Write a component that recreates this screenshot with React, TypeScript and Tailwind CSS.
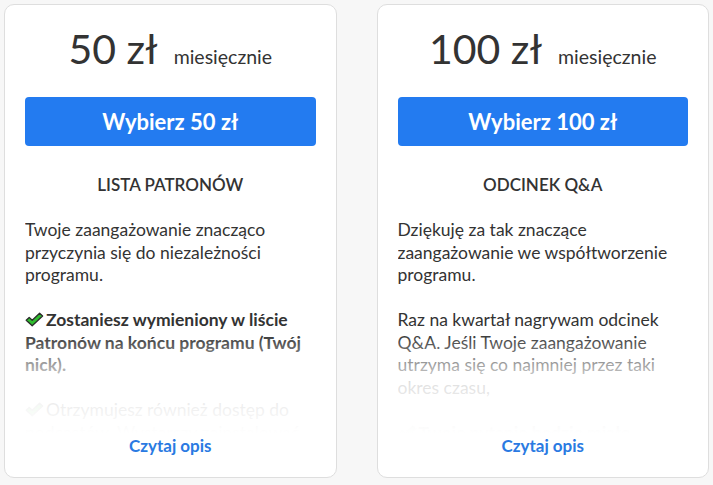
import React from "react";

function Check({ faded = false }: { faded?: boolean }) {
  return (
    <svg
      width="19"
      height="15"
      viewBox="0 0 19 15"
      className="inline-block align-[-1px] mr-[2px]"
      aria-hidden
    >
      <path
        d="M1.2 8.2 L4.2 5.4 L7.2 8.3 L14.6 1.2 L17.6 4 L7.2 13.8 Z"
        fill={faded ? "#7fcf7f" : "#2ebd2e"}
        stroke={faded ? "#8a8a8a" : "#2a2a2a"}
        strokeWidth="1.3"
        strokeLinejoin="round"
      />
    </svg>
  );
}

type Plan = {
  amount: string;
  title: string;
  body: React.ReactNode;
};

function Card({ amount, title, body }: Plan) {
  return (
    <div className="flex h-[474px] flex-col rounded-[10px] border border-[#dedede] bg-white px-5 pb-[19px] pt-[20px]">
      <div className="flex items-baseline justify-center gap-4 text-[#333333]">
        <span className="text-[41px] leading-[48px]">{amount} zł</span>
        <span className="text-[19.5px]">miesięcznie</span>
      </div>
      <button className="mt-[24px] h-[49px] w-full rounded-[4px] bg-[#237bf0] text-[22px] font-bold text-white">
        Wybierz {amount} zł
      </button>
      <div className="mt-[27px] text-center text-[17px] font-semibold uppercase leading-6 text-[#333333]">
        {title}
      </div>
      <div className="relative mt-[22px] h-[214px] overflow-hidden text-[17.5px] leading-[22.5px] text-[#333333]">
        {body}
        <div className="absolute inset-x-0 bottom-0 h-[100px] bg-gradient-to-b from-white/0 via-white/85 to-white" />
      </div>
      <div className="mt-auto text-center text-[17px] font-bold leading-6 text-[#2a7ae2]">
        Czytaj opis
      </div>
    </div>
  );
}

export default function App() {
  return (
    <div
      className="min-h-[485px] w-full bg-[#f7f7f7] px-1 pt-1"
      style={{ fontFamily: "Lato, 'Noto Sans', sans-serif" }}
    >
      <div className="grid grid-cols-2 gap-10">
        <Card
          amount="50"
          title="Lista Patronów"
          body={
            <>
              <p>Twoje zaangażowanie znacząco przyczynia się do niezależności programu.</p>
              <br />
              <p className="font-bold">
                <Check />
                Zostaniesz wymieniony w liście Patronów na końcu programu (Twój nick).
              </p>
              <br />
              <p>
                <Check faded />
                Otrzymujesz również dostęp do podcastów. Wystarczy zainstalować aplikację.
              </p>
            </>
          }
        />
        <Card
          amount="100"
          title="Odcinek Q&A"
          body={
            <>
              <p>Dziękuję za tak znaczące zaangażowanie we współtworzenie programu.</p>
              <br />
              <p>
                Raz na kwartał nagrywam odcinek Q&amp;A. Jeśli Twoje zaangażowanie utrzyma się co
                najmniej przez taki okres czasu,
              </p>
              <br />
              <p className="font-bold">
                <Check faded />
                Twoje pytanie będzie miało pierwszeństwo.
              </p>
            </>
          }
        />
      </div>
    </div>
  );
}
